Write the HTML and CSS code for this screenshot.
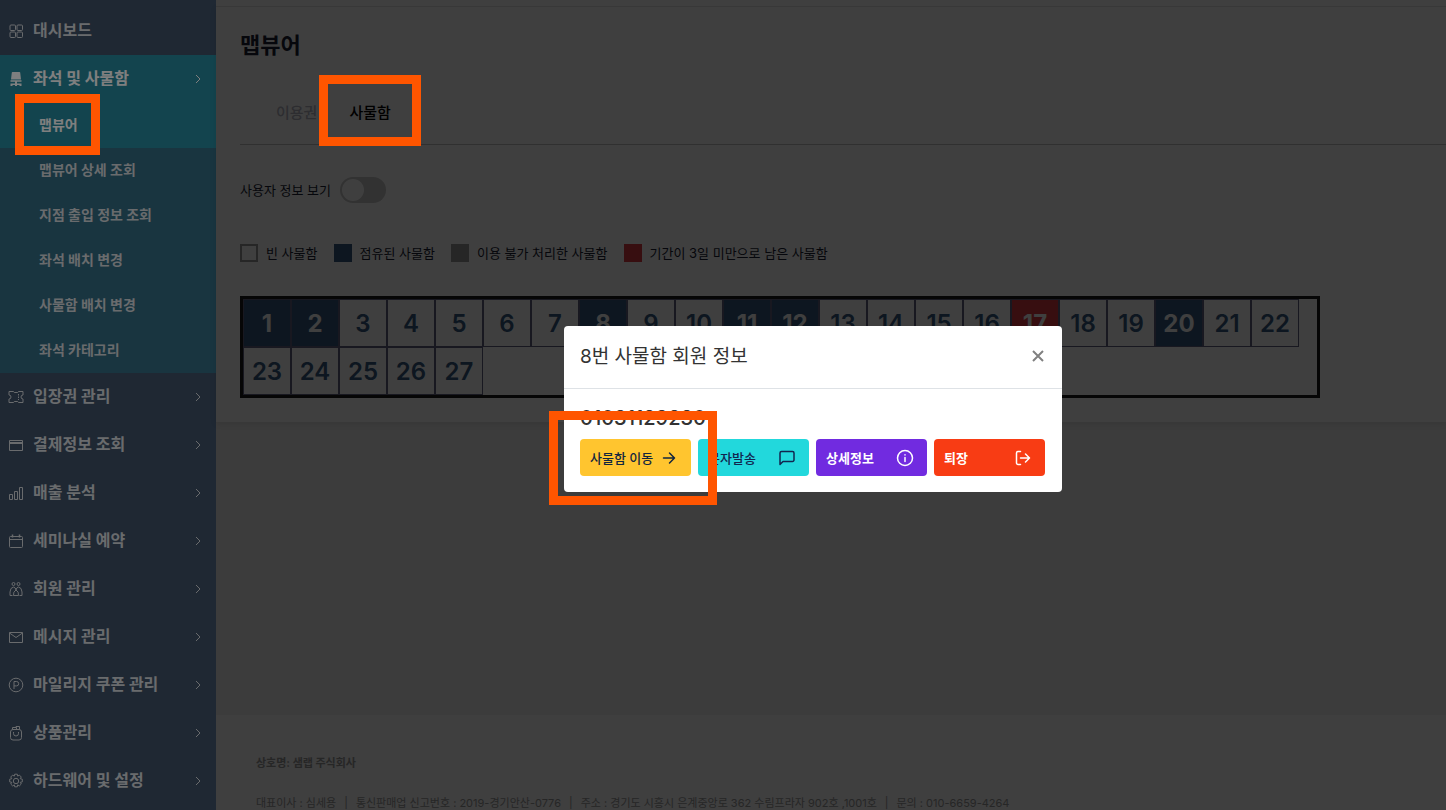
FILE: index.html
```html
<!DOCTYPE html>
<html lang="ko">
<head>
    <meta charset="UTF-8">
    <meta name="viewport" content="width=device-width, initial-scale=1.0">
    <title>맵뷰어</title>
    <link rel="stylesheet" href="styles.css">
</head>
<body>
    <svg class="defs" aria-hidden="true">
        <symbol id="chevron" viewBox="0 0 8 10"><path d="M2 1l4 4-4 4"/></symbol>
    </svg>

    <div class="layout">
        <nav class="sidebar">
            <ul class="menu">
                <li>
                    <a class="menu-link" href="#">
                        <svg class="icon" viewBox="0 0 16 16"><rect x="2" y="2" width="5.500" height="5.500" rx="1"/><rect x="9" y="2" width="5.500" height="5.500" rx="1"/><rect x="2" y="9" width="5.500" height="5.500" rx="1"/><rect x="9" y="9" width="5.500" height="5.500" rx="1"/></svg>
                        <span>대시보드</span>
                    </a>
                </li>
                <li class="open">
                    <a class="menu-link active" href="#">
                        <svg class="icon solid" viewBox="0 0 16 16"><path d="M4.500 1h7q.6 0 .7.600l.8 6.900H3l.8-6.900q.1-.6.7-.6zM2.500 9.200h11v1.600h-11zM7 10.800h2v1.700h4.500V15h-2v-1H9v1H7v-1H4.500v1h-2v-2.500H7z"/></svg>
                        <span>좌석 및 사물함</span>
                        <svg class="chevron"><use href="#chevron"/></svg>
                    </a>
                    <ul class="submenu">
                        <li class="marked"><a class="sub-link active" href="#">맵뷰어</a><i class="mark mark-menu"></i></li>
                        <li><a class="sub-link" href="#">맵뷰어 상세 조회</a></li>
                        <li><a class="sub-link" href="#">지점 출입 정보 조회</a></li>
                        <li><a class="sub-link" href="#">좌석 배치 변경</a></li>
                        <li><a class="sub-link" href="#">사물함 배치 변경</a></li>
                        <li><a class="sub-link" href="#">좌석 카테고리</a></li>
                    </ul>
                </li>
                <li>
                    <a class="menu-link" href="#">
                        <svg class="icon" viewBox="0 0 16 16"><path d="M1 2.500h4.500l.8 1h3.400l.8-1H15v3.500a2 2 0 0 0 0 4v3.500h-4.500l-.8-1H6.300l-.8 1H1V10a2 2 0 0 0 0-4zM10.500 5v1.500M10.500 7.500v1.500M10.500 10v1"/></svg>
                        <span>입장권 관리</span>
                        <svg class="chevron"><use href="#chevron"/></svg>
                    </a>
                </li>
                <li>
                    <a class="menu-link" href="#">
                        <svg class="icon" viewBox="0 0 16 16"><path d="M1.500 3.500h13v10h-13zM1.500 5.500h13M1.500 6.500h13"/></svg>
                        <span>결제정보 조회</span>
                        <svg class="chevron"><use href="#chevron"/></svg>
                    </a>
                </li>
                <li>
                    <a class="menu-link" href="#">
                        <svg class="icon" viewBox="0 0 16 16"><path d="M1.500 9.500h3v5h-3zM6.500 6.500h3v8h-3zM11.500 2.500h3v12h-3z"/></svg>
                        <span>매출 분석</span>
                        <svg class="chevron"><use href="#chevron"/></svg>
                    </a>
                </li>
                <li>
                    <a class="menu-link" href="#">
                        <svg class="icon" viewBox="0 0 16 16"><path d="M2.500 3.500h11q1 0 1 1v9q0 1-1 1h-11q-1 0-1-1v-9q0-1 1-1zM1.500 6.500h13"/><path d="M4.500 1.500v3M11.500 1.500v3" stroke-width="1.500"/></svg>
                        <span>세미나실 예약</span>
                        <svg class="chevron"><use href="#chevron"/></svg>
                    </a>
                </li>
                <li>
                    <a class="menu-link" href="#">
                        <svg class="icon" viewBox="0 0 16 16"><circle cx="5.500" cy="3" r="1.500"/><circle cx="10.500" cy="3" r="1.500"/><path d="M4.500 14.500h-2.500V11q.2-4.500 3.500-5 2.200.5 2.500 3 .3-2.500 2.500-3 3.300.5 3.500 5v3.500h-2.500M8 9q-3 1.500-2.500 5.500h5Q11 10.500 8 9z"/></svg>
                        <span>회원 관리</span>
                        <svg class="chevron"><use href="#chevron"/></svg>
                    </a>
                </li>
                <li>
                    <a class="menu-link" href="#">
                        <svg class="icon" viewBox="0 0 16 16"><path d="M1.500 3.500h13v10h-13zM1.500 4L8 8.500 14.500 4"/></svg>
                        <span>메시지 관리</span>
                        <svg class="chevron"><use href="#chevron"/></svg>
                    </a>
                </li>
                <li>
                    <a class="menu-link" href="#">
                        <svg class="icon" viewBox="0 0 16 16"><circle cx="8" cy="8" r="6.800"/><path d="M6 12V4.500h2.500a2.200 2.200 0 0 1 0 4.400H6"/></svg>
                        <span>마일리지 쿠폰 관리</span>
                        <svg class="chevron"><use href="#chevron"/></svg>
                    </a>
                </li>
                <li>
                    <a class="menu-link" href="#">
                        <svg class="icon" viewBox="0 0 16 16"><rect x="2.500" y="4.500" width="11" height="10.500" rx="2.500"/><path d="M4.500 4.500V2.500h4v2M8 2.500V1.500h3.500v3M5.500 7v1.500a2.500 2.500 0 0 0 5 0V7"/></svg>
                        <span>상품관리</span>
                        <svg class="chevron"><use href="#chevron"/></svg>
                    </a>
                </li>
                <li>
                    <a class="menu-link" href="#">
                        <svg class="icon" viewBox="0 0 16 16"><circle cx="8" cy="8" r="2.700"/><path d="M6.700 1.200h2.600l.4 1.900 1.700-1 1.900 1.900-1.100 1.700 2.100.5v2.700l-2.100.4 1.100 1.700-1.900 1.900-1.700-1-.4 1.900H6.700l-.4-1.900-1.700 1L2.700 11l1.100-1.700-2.100-.4V6.200l2.100-.5L2.700 4l1.900-1.900 1.700 1z"/></svg>
                        <span>하드웨어 및 설정</span>
                        <svg class="chevron"><use href="#chevron"/></svg>
                    </a>
                </li>
            </ul>
        </nav>

        <main class="main">
            <section class="card">
                <h1>맵뷰어</h1>
                <div class="tabs">
                    <button class="tab" type="button">이용권</button>
                    <div class="marked">
                        <button class="tab active" type="button">사물함</button>
                        <i class="mark mark-tab"></i>
                    </div>
                </div>

                <div class="switch-row">
                    <label for="showUser">사용자 정보 보기</label>
                    <input class="switch" type="checkbox" id="showUser">
                </div>

                <ul class="legend">
                    <li><i class="swatch"></i>빈 사물함</li>
                    <li><i class="swatch used"></i>점유된 사물함</li>
                    <li><i class="swatch disabled"></i>이용 불가 처리한 사물함</li>
                    <li><i class="swatch expiring"></i>기간이 3일 미만으로 남은 사물함</li>
                </ul>

                <div class="lockers">
                    <button class="locker used">1</button>
                    <button class="locker used">2</button>
                    <button class="locker">3</button>
                    <button class="locker">4</button>
                    <button class="locker">5</button>
                    <button class="locker">6</button>
                    <button class="locker">7</button>
                    <button class="locker used">8</button>
                    <button class="locker">9</button>
                    <button class="locker">10</button>
                    <button class="locker used">11</button>
                    <button class="locker used">12</button>
                    <button class="locker">13</button>
                    <button class="locker">14</button>
                    <button class="locker">15</button>
                    <button class="locker">16</button>
                    <button class="locker expiring">17</button>
                    <button class="locker">18</button>
                    <button class="locker">19</button>
                    <button class="locker used">20</button>
                    <button class="locker">21</button>
                    <button class="locker">22</button>
                    <button class="locker">23</button>
                    <button class="locker">24</button>
                    <button class="locker">25</button>
                    <button class="locker">26</button>
                    <button class="locker">27</button>
                </div>
            </section>

            <footer class="footer">
                <strong>상호명: 샘랩 주식회사</strong>
                <ul class="company">
                    <li>대표이사 : 심세용</li>
                    <li>통신판매업 신고번호 : 2019-경기안산-0776</li>
                    <li>주소 : 경기도 시흥시 은계중앙로 362 수림프라자 902호 ,1001호</li>
                    <li>문의 : 010-6659-4264</li>
                </ul>
            </footer>
            <div class="shade"></div>
        </main>
    </div>

    <div class="backdrop"></div>

    <div class="modal-wrap">
        <div class="modal" role="dialog" aria-labelledby="modalTitle">
            <div class="modal-header">
                <h2 id="modalTitle">8번 사물함 회원 정보</h2>
                <button class="close" type="button" aria-label="닫기">
                    <svg viewBox="0 0 12 12"><path d="M1 1l10 10M11 1L1 11"/></svg>
                </button>
            </div>
            <div class="modal-body">
                <p class="phone">01031129230</p>
                <div class="actions">
                    <button class="btn move" type="button">사물함 이동
                        <svg viewBox="0 0 18 18"><path d="M3.500 9h11M9.500 4l5 5-5 5"/></svg>
                    </button>
                    <button class="btn message" type="button">문자발송
                        <svg viewBox="0 0 18 18"><path d="M3.500 2.500h11a1.500 1.500 0 0 1 1.500 1.500v7a1.500 1.500 0 0 1-1.500 1.500H5L2 15.500V4a1.500 1.500 0 0 1 1.500-1.500z"/></svg>
                    </button>
                    <button class="btn detail" type="button">상세정보
                        <svg viewBox="0 0 18 18"><circle cx="9" cy="9" r="7.500"/><path d="M9 8.500v4M9 5.700v.3"/></svg>
                    </button>
                    <button class="btn leave" type="button">퇴장
                        <svg viewBox="0 0 18 18"><path d="M6.500 2.500H4A1.500 1.500 0 0 0 2.500 4v10A1.500 1.500 0 0 0 4 15.500h2.500M6.500 9h9M11.500 5l4 4-4 4"/></svg>
                    </button>
                </div>
            </div>
            <i class="mark mark-modal"></i>
        </div>
    </div>
</body>
</html>
```

FILE: styles.css
```css
* {
    box-sizing: border-box;
}
body {
    margin: 0;
    height: 100vh;
    overflow: hidden;
    font-family: Inter, "Noto Sans CJK KR", sans-serif;
    font-size: 13px;
    line-height: 20px;
    color: #181c32;
}
ul {
    list-style: none;
    margin: 0;
    padding: 0;
}
a {
    text-decoration: none;
}
button {
    font-family: inherit;
    cursor: pointer;
}
svg {
    fill: none;
    stroke: currentColor;
}
.defs {
    position: absolute;
    width: 0;
    height: 0;
}
.layout {
    display: flex;
    height: 100vh;
}

/* sidebar */
.sidebar {
    flex: 0 0 216px;
    padding-top: 7px;
    background-color: #3e5066;
    overflow: hidden;
}
.menu-link {
    display: flex;
    align-items: center;
    height: 48px;
    padding: 0 14px 0 8px;
    font-size: 16px;
    font-weight: 700;
    color: #d2d6da;
}
.menu-link span {
    flex: 1;
    padding: 0 0 2px 9px;
}
.icon {
    width: 16px;
    height: 16px;
}
.icon.solid {
    fill: currentColor;
    stroke: none;
}
.chevron {
    width: 8px;
    height: 10px;
}
.menu-link.active,
.sub-link.active {
    background-color: #26889c;
    color: #fff;
}
.submenu {
    background-color: #326a80;
}
.sub-link {
    display: flex;
    align-items: center;
    height: 45px;
    padding: 0 0 2px 39px;
    font-size: 14px;
    font-weight: 700;
    color: #d2d6da;
}

/* content */
.main {
    position: relative;
    flex: 1;
    display: flex;
    flex-direction: column;
    min-width: 0;
    background-color: #f0f0f0;
}
.card {
    margin-top: 6px;
    padding: 24px 0 24px 24px;
    border-top: 1px solid #e0e0e0;
    background-color: #fff;
    box-shadow: 0 -6px 0 #fff, 0 2px 6px rgba(0, 0, 0, 0.1);
}
h1 {
    margin: 0;
    font-size: 22px;
    line-height: 28px;
    font-weight: 700;
}
.tabs {
    display: flex;
    gap: 32px;
    padding: 20px 0 0 36px;
    border-bottom: 1px solid #c0c0c0;
}
.tab {
    height: 65px;
    padding: 0;
    border: none;
    background: none;
    font-size: 15px;
    font-weight: 500;
    color: #b5b5c3;
}
.tab.active {
    color: #000;
}
.switch-row {
    display: flex;
    align-items: center;
    gap: 9px;
    margin-top: 32px;
}
.switch {
    appearance: none;
    width: 46px;
    height: 26px;
    margin: 0;
    padding: 2px;
    border-radius: 13px;
    background-color: #c8c8c8;
}
.switch::before {
    content: "";
    display: block;
    width: 22px;
    height: 22px;
    border-radius: 50%;
    background-color: #fff;
}
.switch:checked::before {
    margin-left: 20px;
}
.legend {
    display: flex;
    flex-wrap: wrap;
    gap: 16px;
    margin-top: 40px;
}
.legend li {
    display: flex;
    align-items: center;
    gap: 8px;
}
.swatch {
    width: 18px;
    height: 18px;
    border: 2px solid #999;
}
.swatch.used {
    border: none;
    background-color: #345880;
}
.swatch.disabled {
    background-color: #999;
}
.swatch.expiring {
    border: none;
    background-color: #dc3840;
}
.lockers {
    display: flex;
    flex-wrap: wrap;
    max-width: 1080px;
    margin-top: 33px;
    border: 3px solid #181818;
}
.locker {
    width: 48px;
    height: 48px;
    padding: 0;
    border: 1px solid #606080;
    background-color: #fff;
    font-size: 24px;
    font-weight: 600;
    color: #345880;
}
.locker.used,
.locker.expiring {
    font-weight: 700;
    color: #fff;
}
.locker.used {
    background-color: #345880;
}
.locker.expiring {
    background-color: #dc3840;
}
.footer {
    flex: 0 0 95px;
    margin-top: auto;
    padding: 38px 40px 0;
    background-color: #fcfcfc;
    font-size: 11px;
    color: #9a9a9a;
    white-space: nowrap;
    overflow: hidden;
}
.company {
    display: flex;
    margin-top: 20px;
}
.company li + li::before {
    content: "|";
    margin: 0 8px;
}

/* overlays */
.shade {
    position: absolute;
    inset: 0;
    z-index: 10;
    background-color: rgba(0, 0, 0, 0.5);
}
.backdrop {
    position: fixed;
    inset: 0;
    z-index: 11;
    background-color: rgba(0, 0, 0, 0.5);
}
.modal-wrap {
    position: fixed;
    inset: 0;
    z-index: 20;
    display: flex;
    align-items: center;
    justify-content: center;
    padding: 8px 0 0 180px;
}
.modal {
    position: relative;
    width: 498px;
    border-radius: 4px;
    background-color: #fff;
}
.modal-header {
    display: flex;
    align-items: center;
    justify-content: space-between;
    height: 63px;
    padding: 0 16px;
    border-bottom: 1px solid #dee2e6;
}
h2 {
    margin: 0;
    font-size: 19px;
    line-height: 28px;
    font-weight: 400;
    color: #333;
}
.close {
    display: flex;
    padding: 2px 2px 4px;
    border: none;
    background: none;
    color: #808080;
}
.close svg {
    width: 12px;
    height: 12px;
    stroke-width: 2;
}
.modal-body {
    padding: 16px;
}
.phone {
    margin: 0 0 8px;
    font-size: 20px;
    line-height: 26px;
    font-weight: 500;
    color: #333;
}
.actions {
    display: flex;
    gap: 7px;
}
.btn {
    display: flex;
    align-items: center;
    justify-content: space-between;
    width: 111px;
    height: 37px;
    padding: 0 13px 0 10px;
    border: none;
    border-radius: 4px;
    font-size: 13px;
    font-weight: 500;
    color: #fff;
}
.btn svg {
    width: 18px;
    height: 18px;
    stroke-width: 1.5;
    stroke-linecap: round;
    stroke-linejoin: round;
}
.btn.move {
    background-color: #ffc52f;
    color: #12263f;
}
.btn.message {
    background-color: #22d8dc;
    color: #12264f;
}
.btn.detail {
    background-color: #712be0;
    font-weight: 700;
}
.btn.leave {
    background-color: #f83c14;
    font-weight: 700;
}

/* guide frames */
.marked {
    position: relative;
}
.mark {
    position: absolute;
    z-index: 30;
    border: 9px solid #ff5500;
    pointer-events: none;
}
.mark-menu {
    top: -9px;
    left: 15px;
    width: 85px;
    height: 61px;
}
.mark-tab {
    top: -4px;
    left: -30px;
    width: 102px;
    height: 71px;
}
.mark-modal {
    top: 85px;
    left: -15px;
    width: 168px;
    height: 94px;
}
```
